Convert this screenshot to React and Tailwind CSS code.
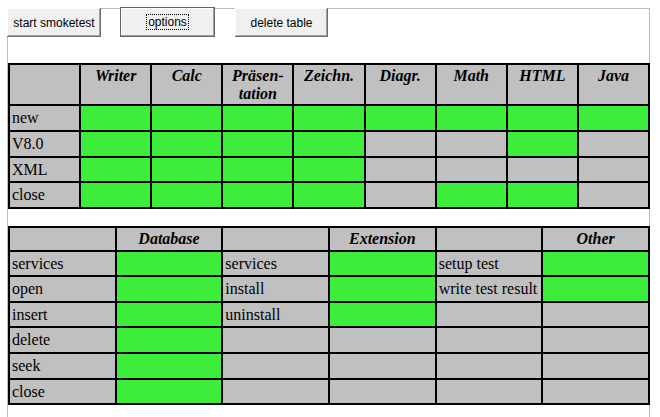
import React from "react";

const G = "g";
const N = "n";

const head1 = ["", "Writer", "Calc", "Präsen-\ntation", "Zeichn.", "Diagr.", "Math", "HTML", "Java"];
const rows1 = [
  ["new", G, G, G, G, G, G, G, G],
  ["V8.0", G, G, G, G, N, N, G, N],
  ["XML", G, G, G, G, N, N, N, N],
  ["close", G, G, G, G, N, G, G, N],
];
const rowH1 = ["h-[24px]", "h-[24px]", "h-[23px]", "h-[24px]"];

const head2 = ["", "Database", "", "Extension", "", "Other"];
const rows2 = [
  ["services", G, "services", G, "setup test", G],
  ["open", G, "install", G, "write test result", G],
  ["insert", G, "uninstall", G, "", ""],
  ["delete", G, "", "", "", ""],
  ["seek", G, "", "", "", ""],
  ["close", G, "", "", "", ""],
];
const rowH2 = ["h-[23px]", "h-[24px]", "h-[23px]", "h-[24px]", "h-[24px]", "h-[23px]"];

function HeadCell({ text, h }) {
  const lines = text.split("\n");
  return (
    <div className={`bg-[#c0c0c0] ${h} pt-[2px] text-center font-bold italic text-[16px] leading-[18px] text-black`}>
      {lines.map((l, i) => (
        <div key={i}>{l}</div>
      ))}
    </div>
  );
}

function DataCell({ v, h }) {
  if (v === G) return <div className={`bg-[#3ced3c] ${h}`} />;
  if (v === N || v === "") return <div className={`bg-[#c0c0c0] ${h}`} />;
  return (
    <div className={`bg-[#c0c0c0] ${h} flex items-center pl-[2px] text-[16px] leading-[18px] text-black whitespace-nowrap`}>
      {v}
    </div>
  );
}

const btnBase =
  "h-[29px] bg-[#f0f0f0] text-[12px] text-black flex items-center justify-center shadow-[inset_-1px_-1px_0_#6d6d6d,inset_1px_1px_0_#ffffff,inset_-2px_-2px_0_#a0a0a0]";

export default function App() {
  return (
    <div className="w-[660px] h-[417px] bg-white overflow-hidden" style={{ fontFamily: '"Liberation Serif", serif' }}>
      <div className="ml-[7px] mt-[8px] w-[643px] h-[409px] border border-b-0 border-[#bcbcbc]">
        <div className="flex items-start -ml-px -mt-px" style={{ fontFamily: '"Liberation Sans", Arial, sans-serif' }}>
          <div className={`${btnBase} w-[94px]`}>start smoketest</div>
          <div className="ml-[19px] -mt-px w-[95px] h-[30px] border border-[#646464] bg-[#f0f0f0] flex items-center justify-center text-[12px] text-black shadow-[inset_-1px_-1px_0_#a0a0a0,inset_1px_1px_0_#ffffff]">
            <span className="border border-dotted border-black px-[1px] leading-[14px]">options</span>
          </div>
          <div className={`${btnBase} ml-[20px] w-[93px]`}>delete table</div>
        </div>

        <div className="mt-[26px] w-[642px] grid grid-cols-9 gap-[2px] bg-black p-[2px]">
          {head1.map((t, i) => (
            <HeadCell key={i} text={t} h="h-[39px]" />
          ))}
          {rows1.map((r, ri) =>
            r.map((v, ci) => <DataCell key={ri + "-" + ci} v={v} h={rowH1[ri]} />)
          )}
        </div>

        <div className="mt-[17px] w-[642px] grid grid-cols-6 gap-[2px] bg-black p-[2px]">
          {head2.map((t, i) => (
            <HeadCell key={i} text={t} h="h-[22px]" />
          ))}
          {rows2.map((r, ri) =>
            r.map((v, ci) => <DataCell key={ri + "-" + ci} v={v} h={rowH2[ri]} />)
          )}
        </div>
      </div>
    </div>
  );
}
